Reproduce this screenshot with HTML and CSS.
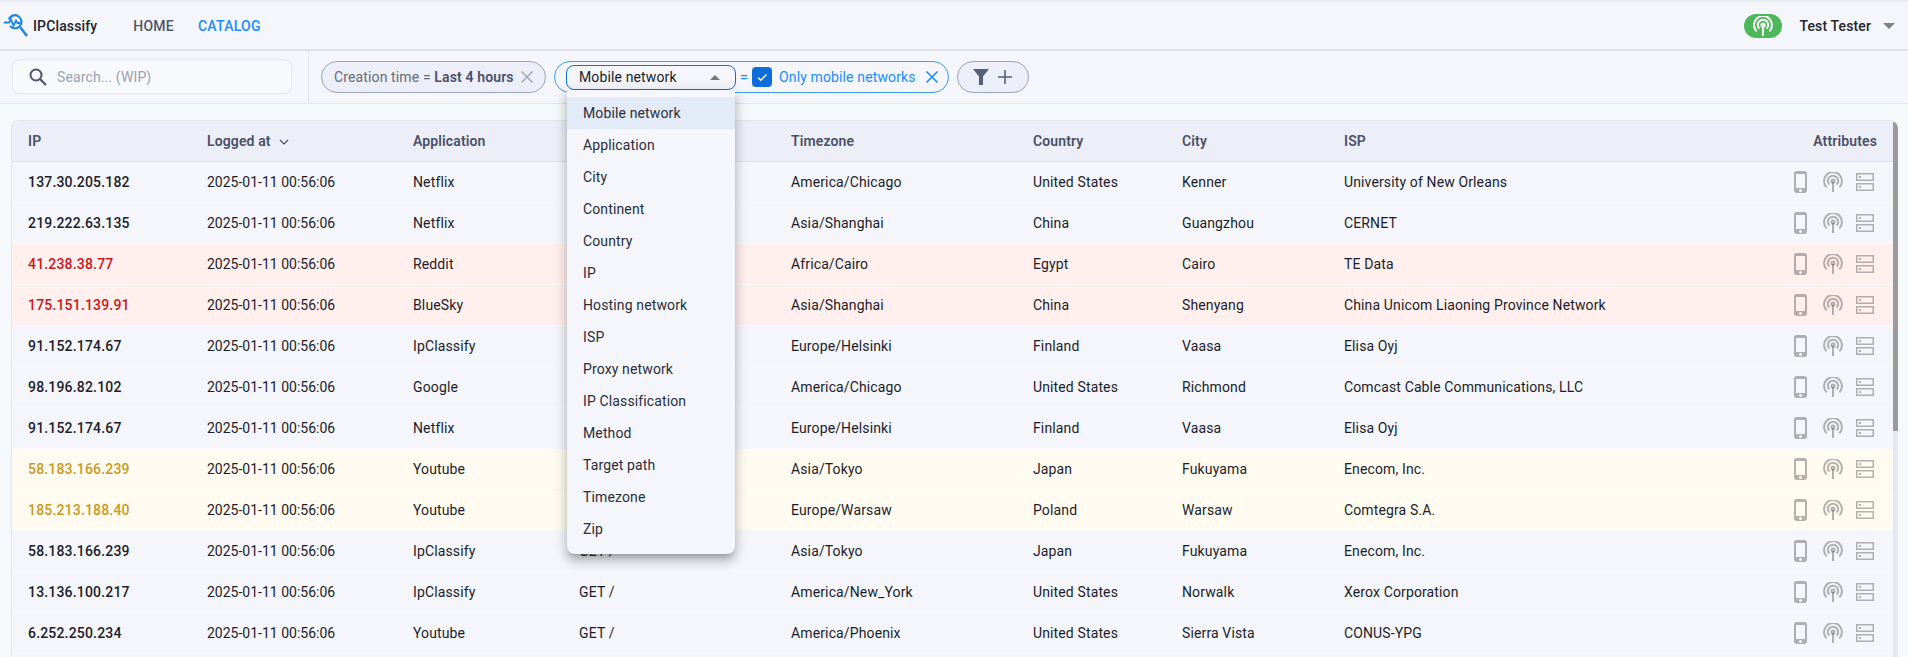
FILE: index.html
```html
<!DOCTYPE html>
<html>
<head>
  <title>IPClassify</title>
  <link rel="stylesheet" href="styles.css">
</head>
<body>
  <svg class="defs" width="0" height="0">
    <symbol id="i-phone" viewBox="5 1 13 22">
      <path d="M15.5 1h-8C6.12 1 5 2.12 5 3.5v17C5 21.88 6.12 23 7.5 23h8c1.38 0 2.5-1.12 2.5-2.5v-17C18 2.12 16.88 1 15.5 1zm-4 21c-.83 0-1.5-.67-1.5-1.5s.67-1.5 1.5-1.5 1.5.67 1.5 1.5-.67 1.5-1.5 1.5zm4.5-4H7V4h9v14z" fill="currentColor"/>
    </symbol>
    <symbol id="i-antenna" viewBox="0 0 20 20">
      <g fill="none" stroke="currentColor" stroke-width="2">
        <path d="M3.6 15.4a9 9 0 1 1 12.8 0"/>
        <path d="M6.3 12.6a5.2 5.2 0 1 1 7.4 0"/>
        <circle cx="10" cy="9" r="1.6"/>
        <path d="M10 10v10"/>
      </g>
    </symbol>
    <symbol id="i-server" viewBox="0 0 18 18">
      <g fill="none" stroke="currentColor" stroke-width="1.5">
        <rect x=".75" y=".75" width="16.5" height="6.5"/>
        <rect x=".75" y="10.75" width="16.5" height="6.5"/>
      </g>
      <path d="M3 3h2v2H3zM3 13h2v2H3z" fill="currentColor"/>
    </symbol>
  </svg>

  <header class="navbar">
    <svg class="logo" viewBox="0 0 24 23" width="24" height="23">
      <g fill="none" stroke="#1a86e8" stroke-width="2.2">
        <path d="M4.8 5.5A6.5 6.5 0 1 1 6 12"/>
        <path d="M16 13l7 9" stroke-width="2.5"/>
        <path d="M0 8.5h5l2-3 2.5 6 2.5-5 1.5 2.5h3" stroke-width="1.8"/>
      </g>
    </svg>
    <span class="brand">IPClassify</span>
    <nav class="menu">
      <a class="menu-link">HOME</a>
      <a class="menu-link active">CATALOG</a>
    </nav>
    <div class="user">
      <span class="status-pill"><svg width="20" height="20"><use href="#i-antenna"/></svg></span>
      <span class="user-name">Test Tester</span>
      <span class="caret"></span>
    </div>
  </header>

  <section class="toolbar">
    <div class="search-wrap">
      <div class="search">
        <svg viewBox="0 0 18 18" width="18" height="18">
          <circle cx="7" cy="7" r="5.5" fill="none" stroke="#4f566b" stroke-width="2"/>
          <path d="M11 11l6 6" stroke="#4f566b" stroke-width="2.2"/>
        </svg>
        <span>Search... (WIP)</span>
      </div>
    </div>
    <div class="filters">
      <div class="chip chip-time">
        <span>Creation time = <b>Last 4 hours</b></span>
        <svg class="chip-x" viewBox="0 0 14 14" width="14" height="14"><path d="M1.5 1.5l11 11M12.5 1.5l-11 11" stroke="#a5a8b2" stroke-width="1.6"/></svg>
      </div>
      <div class="chip chip-edit">
        <div class="select">
          <span>Mobile network</span>
          <span class="caret caret-up"></span>
          <ul class="dropdown">
            <li class="selected">Mobile network</li>
            <li>Application</li>
            <li>City</li>
            <li>Continent</li>
            <li>Country</li>
            <li>IP</li>
            <li>Hosting network</li>
            <li>ISP</li>
            <li>Proxy network</li>
            <li>IP Classification</li>
            <li>Method</li>
            <li>Target path</li>
            <li>Timezone</li>
            <li>Zip</li>
          </ul>
        </div>
        <span class="equals">=</span>
        <span class="checkbox">
          <svg viewBox="0 0 20 20" width="20" height="20"><path d="M6 10.5l2.8 2.8L14.5 7.5" fill="none" stroke="#fff" stroke-width="1.4"/></svg>
        </span>
        <span class="chip-value">Only mobile networks</span>
        <svg class="chip-x" viewBox="0 0 14 14" width="14" height="14"><path d="M1.5 1.5l11 11M12.5 1.5l-11 11" stroke="#1a8cff" stroke-width="1.6"/></svg>
      </div>
      <div class="chip chip-add">
        <svg viewBox="0 0 16 16" width="16" height="16"><path d="M0 0h16l-6 7.5V16H6V7.5z" fill="#565e7a"/></svg>
        <svg viewBox="0 0 14 14" width="14" height="14"><path d="M7 0v14M0 7h14" stroke="#565e7a" stroke-width="1.6"/></svg>
      </div>
    </div>
  </section>

  <main class="content">
    <div class="table-wrap">
      <table class="ip-table">
        <colgroup>
          <col class="c-ip"><col class="c-logged"><col class="c-app"><col class="c-method"><col class="c-tz"><col class="c-country"><col class="c-city"><col class="c-isp"><col>
        </colgroup>
        <thead>
          <tr>
            <th>IP</th>
            <th>Logged at <svg class="sort" viewBox="0 0 10 6" width="10" height="6"><path d="M1 1l4 4 4-4" fill="none" stroke="#4a5068" stroke-width="1.2"/></svg></th>
            <th>Application</th>
            <th>Method</th>
            <th>Timezone</th>
            <th>Country</th>
            <th>City</th>
            <th>ISP</th>
            <th class="attr-col">Attributes</th>
          </tr>
        </thead>
        <tbody id="rows"></tbody>
      </table>
      <div class="scrollbar"><div class="thumb"></div></div>
    </div>
  </main>

  <script>
    var data = [
      ["137.30.205.182", "Netflix", "America/Chicago", "United States", "Kenner", "University of New Orleans", ""],
      ["219.222.63.135", "Netflix", "Asia/Shanghai", "China", "Guangzhou", "CERNET", ""],
      ["41.238.38.77", "Reddit", "Africa/Cairo", "Egypt", "Cairo", "TE Data", "bad"],
      ["175.151.139.91", "BlueSky", "Asia/Shanghai", "China", "Shenyang", "China Unicom Liaoning Province Network", "bad"],
      ["91.152.174.67", "IpClassify", "Europe/Helsinki", "Finland", "Vaasa", "Elisa Oyj", ""],
      ["98.196.82.102", "Google", "America/Chicago", "United States", "Richmond", "Comcast Cable Communications, LLC", ""],
      ["91.152.174.67", "Netflix", "Europe/Helsinki", "Finland", "Vaasa", "Elisa Oyj", ""],
      ["58.183.166.239", "Youtube", "Asia/Tokyo", "Japan", "Fukuyama", "Enecom, Inc.", "warn"],
      ["185.213.188.40", "Youtube", "Europe/Warsaw", "Poland", "Warsaw", "Comtegra S.A.", "warn"],
      ["58.183.166.239", "IpClassify", "Asia/Tokyo", "Japan", "Fukuyama", "Enecom, Inc.", ""],
      ["13.136.100.217", "IpClassify", "America/New_York", "United States", "Norwalk", "Xerox Corporation", ""],
      ["6.252.250.234", "Youtube", "America/Phoenix", "United States", "Sierra Vista", "CONUS-YPG", ""]
    ];
    var attrs = '<span class="attrs">' +
      '<svg class="attr-phone" width="13" height="22"><use href="#i-phone"/></svg>' +
      '<svg width="20" height="20"><use href="#i-antenna"/></svg>' +
      '<svg width="18" height="18"><use href="#i-server"/></svg></span>';
    var html = "";
    for (var i = 0; i < data.length; i++) {
      var r = data[i];
      html += '<tr class="' + r[6] + '"><td class="ip">' + r[0] + '</td><td class="date">2025-01-11 00:56:06</td><td>' + r[1] +
        '</td><td>GET /</td><td>' + r[2] + '</td><td>' + r[3] + '</td><td>' + r[4] + '</td><td>' + r[5] +
        '</td><td class="attr-col">' + attrs + '</td></tr>';
    }
    document.getElementById("rows").innerHTML = html;
  </script>
</body>
</html>
```

FILE: styles.css
```css
* {
  box-sizing: border-box;
}

html, body {
  height: 100%;
}

body {
  margin: 0;
  overflow: hidden;
  display: flex;
  flex-direction: column;
  background-color: #f4f6fb;
  color: #1b1d2a;
  font-family: Roboto, "Liberation Sans", sans-serif;
  font-size: 14px;
  letter-spacing: 0.13px;
}

.defs {
  position: absolute;
}

/* top bar */
.navbar {
  flex: none;
  height: 51px;
  display: flex;
  align-items: center;
  padding: 0 13px 0 4px;
  border-top: 2px solid #e9ebf2;
  border-bottom: 2px solid #dfe1e9;
}

.logo {
  flex: none;
}

.brand {
  margin-left: 5px;
  font-weight: 500;
  color: #23252f;
}

.menu {
  display: flex;
  gap: 24px;
  margin-left: 36px;
}

.menu-link {
  font-weight: 500;
  letter-spacing: 0.25px;
  color: #4f566b;
}

.menu-link.active {
  color: #1a8cff;
}

.user {
  margin-left: auto;
  display: flex;
  align-items: center;
}

.status-pill {
  width: 38px;
  height: 24px;
  display: flex;
  align-items: center;
  justify-content: center;
  border-radius: 12px;
  background-color: #4db85a;
  color: #fff;
}

.user-name {
  margin-left: 17px;
  font-weight: 500;
  color: #23252f;
}

.caret {
  width: 0;
  height: 0;
  margin-left: 12px;
  border-left: 6px solid transparent;
  border-right: 6px solid transparent;
  border-top: 6px solid #808080;
}

/* filter row */
.toolbar {
  flex: none;
  height: 53px;
  display: flex;
  border-bottom: 1px solid #e3e5ed;
}

.search-wrap {
  width: 309px;
  padding: 8px 16px 0 12px;
  border-right: 1px solid #e3e5ed;
}

.search {
  height: 35px;
  display: flex;
  align-items: center;
  gap: 10px;
  padding-left: 16px;
  border: 1px solid #e6e8f0;
  border-radius: 8px;
  background-color: #f7f9fc;
  color: #9ca1b0;
}

.filters {
  display: flex;
  align-items: center;
  gap: 8px;
  padding-left: 12px;
}

.chip {
  height: 32px;
  display: flex;
  align-items: center;
  padding: 0 11px 0 12px;
  border: 1px solid #9aa3bb;
  border-radius: 16px;
  background-color: #eceff7;
  color: #646a7c;
}

.chip-time {
  width: 225px;
  justify-content: space-between;
}

.chip b {
  font-weight: 600;
  color: #4a5068;
}

.chip-edit {
  width: 395px;
  padding: 0 9px 0 11px;
  border-color: #3d9bf0;
  background-color: transparent;
}

.chip-edit .chip-x {
  margin-left: auto;
}

.select {
  position: relative;
  width: 170px;
  height: 25px;
  display: flex;
  align-items: center;
  justify-content: space-between;
  padding: 0 15px 0 12px;
  border: 1px solid #0e6fd6;
  border-radius: 8px;
  color: #1b1d2a;
}

.caret-up {
  margin: 0;
  border-left-width: 5px;
  border-right-width: 5px;
  border-top: none;
  border-bottom: 5px solid #777;
}

.dropdown {
  position: absolute;
  z-index: 5;
  top: 24px;
  left: 0;
  width: 168px;
  margin: 0;
  padding: 7px 0 9px;
  list-style: none;
  border-radius: 0 0 8px 8px;
  background-color: #f4f6fb;
  box-shadow: 0 5px 5px -3px rgba(0,0,0,.2), 0 8px 10px 1px rgba(0,0,0,.14), 0 3px 14px 2px rgba(0,0,0,.12);
}

.dropdown li {
  height: 32px;
  line-height: 32px;
  padding-left: 16px;
  color: #2b2d3a;
}

.dropdown li.selected {
  background-color: #e2ebf7;
}

.equals {
  margin: 0 4px;
  font-weight: 500;
  color: #1a8cff;
}

.checkbox {
  width: 20px;
  height: 20px;
  border-radius: 4px;
  background-color: #0d6edb;
}

.checkbox svg {
  display: block;
}

.chip-value {
  margin-left: 7px;
  color: #1a8cff;
}

.chip-add {
  width: 72px;
  gap: 9px;
  padding: 0 0 0 15px;
}

/* table */
.content {
  flex: 1;
  min-height: 0;
  padding: 16px 10px 0 11px;
  background-color: #f5f9fb;
}

.table-wrap {
  height: 100%;
  display: flex;
  overflow: hidden;
  border: 1px solid #e3e5ee;
  border-width: 1px 0 0 1px;
  border-radius: 8px 8px 0 0;
  background-color: #f4f6fb;
}

.ip-table {
  flex: 1;
  align-self: flex-start;
  table-layout: fixed;
  border-collapse: collapse;
  width: 100%;
}

.c-ip { width: 179px; }
.c-logged { width: 206px; }
.c-app { width: 166px; }
.c-method { width: 212px; }
.c-tz { width: 242px; }
.c-country { width: 149px; }
.c-city { width: 162px; }
.c-isp { width: 420px; }

th {
  height: 40px;
  padding: 0 16px;
  text-align: left;
  font-weight: 600;
  color: #4a5068;
  background-color: #eceff7;
  border-bottom: 1px solid #dfe1ea;
}

th.attr-col, td.attr-col {
  text-align: right;
}

.sort {
  margin-left: 5px;
  vertical-align: 1px;
}

td {
  height: 41px;
  padding: 0 16px;
  white-space: nowrap;
  border-bottom: 1px solid #f7f8fc;
}

td.ip {
  padding-top: 1px;
  font-weight: 500;
  letter-spacing: 0.18px;
}

td.date {
  letter-spacing: 0;
}

tr.bad {
  background-color: #fff0ee;
}

tr.bad .ip {
  color: #c9151b;
}

tr.warn {
  background-color: #fffbf0;
}

tr.warn .ip {
  color: #c99a1e;
}

.attrs {
  display: inline-flex;
  align-items: center;
  gap: 13px;
  margin-right: 3px;
  vertical-align: middle;
  color: rgba(50, 50, 50, .36);
}

.attr-phone {
  margin-right: 3px;
}

.scrollbar {
  flex: none;
  width: 5px;
  background-color: #e6e8ef;
}

.thumb {
  height: 310px;
  border-radius: 0 4px 0 0;
  background-color: #9a9a9a;
}
```
